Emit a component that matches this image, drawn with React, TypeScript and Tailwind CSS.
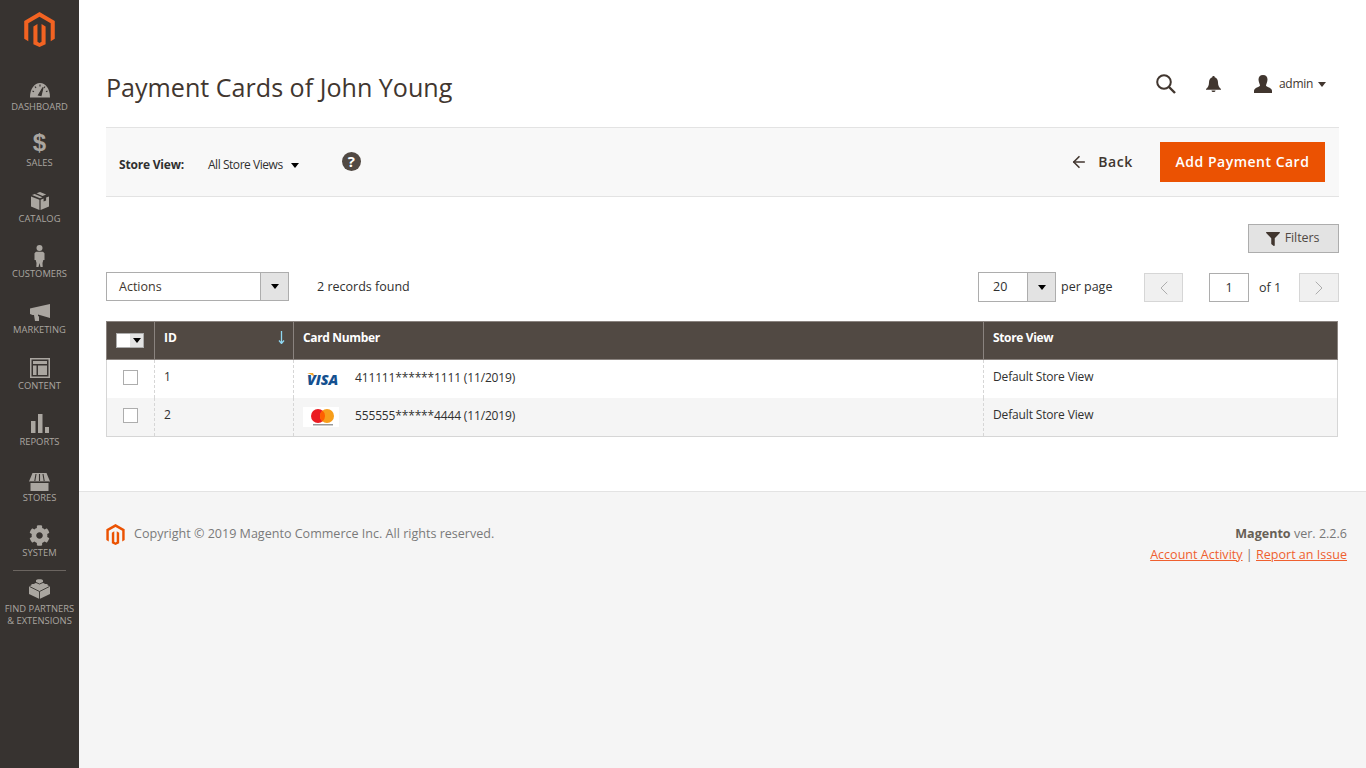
import { FaCog, FaFilter } from "react-icons/fa";
import { ArrowLeft, ChevronLeft, ChevronRight } from "lucide-react";
import type { ReactNode } from "react";

function Logo({ className }: { className: string }) {
  return (
    <svg viewBox="0 0 24 27.5" className={className} fill="currentColor">
      <path d="M12 0 0 7v14l3.2 1.9V8.9L12 3.8l8.8 5.1v14L24 21V7z" />
      <path d="M13.6 23.4 12 24.3l-1.6-.9V9.5L7.2 11.4v13.900L12 27.500l4.800-2.200V11.400l-3.200-1.900z" />
    </svg>
  );
}

function Caret({ className = "" }: { className?: string }) {
  return <span className={`inline-block w-0 h-0 border-x-[4px] border-x-transparent border-t-[5px] ${className}`} />;
}

const navItems: { label: string; icon: ReactNode }[] = [
  {
    label: "Dashboard",
    icon: (
      <svg viewBox="0 0 20 16" className="w-[20px] h-[16px] mt-[2px]">
        <path d="M0 15.500C0 6.500 4.500 1 10 1s10 5.500 10 14.500z" fill="currentColor" />
        <path d="M10 2.500v2M5 4.500l1 1.500M15 4.500l-1 1.500M2.500 9l1.500.8M17.500 9l-1.500.8M8.500 13 13 5.500l-2 8z" stroke="#373330" strokeWidth="1.200" fill="#373330" />
      </svg>
    ),
  },
  {
    label: "Sales",
    icon: <span className="text-[24px] leading-[20px] mb-[3px] font-bold font-['Liberation_Sans',sans-serif]">$</span>,
  },
  {
    label: "Catalog",
    icon: (
      <svg viewBox="0 0 18 18" className="w-[18px] h-[18px]" fill="currentColor">
        <path d="M9 0 5.500 1.300l6 2.700L15.200 2.500zM3.700 2 1 3l8 3.200 2.400-1zM0 4.500 8.400 7.800V18L0 14.500zM18 4.500V14.500L9.600 18V7.800l3-1.200v3l2.500-1V5.600z" />
      </svg>
    ),
  },
  {
    label: "Customers",
    icon: (
      <svg viewBox="0 0 11 22" className="w-[11px] h-[22px]" fill="currentColor">
        <circle cx="5.500" cy="3" r="3" />
        <path d="M2 6.800h7l1.500 1.500V15H9.300l-.8 3 .2 4H6.500L5.500 18l-1 4H2.300l.2-4-.8-3H.5V8.300z" />
      </svg>
    ),
  },
  {
    label: "Marketing",
    icon: (
      <svg viewBox="0 0 20 17" className="w-[20px] h-[17px]" fill="currentColor">
        <path d="M20 0v14L8 10.500V12l1 .5V17H5l-1-6H2.500L0 10V4.500L2 4z" />
      </svg>
    ),
  },
  {
    label: "Content",
    icon: (
      <svg viewBox="0 0 20 20" className="w-[20px] h-[20px]" fill="currentColor">
        <path fillRule="evenodd" d="M0 0h20v20H0zM1.500 1.500v17h17v-17zM3 3h14v3H3zM3 7.500h3.500V17H3zM8 7.500h9V17H8z" />
      </svg>
    ),
  },
  {
    label: "Reports",
    icon: (
      <svg viewBox="0 0 18 19" className="w-[18px] h-[19px]" fill="currentColor">
        <path d="M0 7h4.500v12H0zM7 0h4.500v19H7zM14 13h4v6h-4z" />
      </svg>
    ),
  },
  {
    label: "Stores",
    icon: (
      <svg viewBox="0 0 21 18" className="w-[21px] h-[18px] mt-[4px]" fill="currentColor">
        <path d="M3.500 0h14L21 8.500H0z" />
        <path d="M1.500 10H19.500V18H1.500z" />
        <path d="M7 1 5.800 8M10.500 1v7M14 1l1.200 7" stroke="#373330" strokeWidth="1.100" />
        <path d="M1 9.200h19" stroke="#373330" strokeWidth=".8" />
      </svg>
    ),
  },
  { label: "System", icon: <FaCog className="w-[21px] h-[21px]" /> },
];

export default function App() {
  return (
    <div className="flex min-h-[768px] font-['Open_Sans',sans-serif] text-[#303030] bg-white">
      {/* Sidebar */}
      <aside className="w-[79px] shrink-0 bg-[#373330] text-[#aaa6a0]">
        <div className="h-[65px] flex justify-center pt-[12px]">
          <Logo className="w-[31px] h-[35px] text-[#f26322]" />
        </div>
        {navItems.map((item) => (
          <div key={item.label} className="h-[55.8px] flex flex-col items-center pt-[12px]">
            <div className="h-[24px] flex items-center justify-center">{item.icon}</div>
            <span className="text-[9.4px] leading-[14px] uppercase mt-[-1px]">{item.label}</span>
          </div>
        ))}
        <div className="mx-[13px] mt-[3px] border-t border-[#6b6560]" />
        <div className="flex flex-col items-center pt-[7px]">
          <svg viewBox="0 0 21 21" className="w-[21px] h-[21px]" fill="currentColor">
            <path d="M0 8.500 10.500 3 21 8.500v7.500L10.500 21 0 16z" />
            <path d="M7 4.500V2.500c0-1.800 7-1.800 7 0v2zM2 7c0-1.500 5-1.500 5 0l-2.500 1.500zM14 7c0-1.500 5-1.500 5 0l-2.500 1.500z" />
            <path d="M.5 8.500 10.500 13.500 20.500 8.500M10.500 13.500V21M7 4.500 10.500 6 14 4.500" stroke="#373330" strokeWidth=".9" fill="none" />
          </svg>
          <span className="text-[9.4px] leading-[12px] uppercase mt-[4px] text-center">
            Find Partners
            <br />& Extensions
          </span>
        </div>
      </aside>

      <div className="flex-1 min-w-0 flex flex-col">
        <main className="h-[491px] pl-[27px] pr-[27px]">
          {/* Title row */}
          <div className="h-[127px] flex items-start justify-between pt-[69px]">
            <h1 className="text-[25.1px] leading-[36px] font-normal text-[#41362f]">Payment Cards of John Young</h1>
            <div className="flex items-center mt-[5px] pr-[13px] text-[#41362f]">
              <svg viewBox="0 0 20 20" className="w-[20px] h-[20px]" fill="none" stroke="currentColor" strokeWidth="2">
                <circle cx="8" cy="8" r="6.800" />
                <path d="M13 13l6 6" strokeWidth="2.400" />
              </svg>
              <svg viewBox="0 0 15 16" className="w-[15px] h-[16px] ml-[30px]" fill="currentColor">
                <path d="M7.500 0c.8 0 1.200.5 1.200 1.200C11 2 12 3.800 12 6.500c0 3 1 5 3 6.500v.8H0V13c2-1.500 3-3.500 3-6.500 0-2.700 1-4.500 3.300-5.300C6.300.5 6.700 0 7.500 0zM5.500 14.500h4C9.500 15.500 8.500 16 7.500 16s-2-.5-2-1.500z" />
              </svg>
              <svg viewBox="0 0 18 18" className="w-[18px] h-[18px] ml-[33px]" fill="currentColor">
                <path d="M9 0c3 0 4.500 2 4.500 4.500S12 9.500 12 10.500c0 1.500 6 2 6 5.500v2H0v-2c0-3.500 6-4 6-5.500C6 9.500 4.500 7 4.500 4.500S6 0 9 0z" />
              </svg>
              <span className="text-[12px] ml-[7px] tracking-[-0.3px] text-[#41362f]">admin</span>
              <Caret className="ml-[5px] border-t-[#41362f]" />
            </div>
          </div>

          {/* Store view bar */}
          <div className="h-[70px] bg-[#f8f8f8] border-y border-[#e3e3e3] flex items-center justify-between pl-[13px] pr-[14px]">
            <div className="flex items-center">
              <span className="text-[12px] font-bold tracking-[-0.2px] mt-[6px]">Store View:</span>
              <span className="text-[12px] ml-[24px] tracking-[-0.45px] mt-[6px]">All Store Views</span>
              <Caret className="ml-[8px] mt-[6px] border-t-black" />
              <span className="ml-[43px] mb-[2px] w-[19px] h-[19px] rounded-full bg-[#514943] text-white text-[15px] font-bold leading-[19px] text-center">?</span>
            </div>
            <div className="flex items-center">
              <ArrowLeft className="w-[18px] h-[18px] text-[#41362f]" strokeWidth={2.2} />
              <span className="ml-[10px] mb-[1px] text-[14px] font-semibold tracking-[0.6px] text-[#41362f]">Back</span>
              <button className="ml-[27px] pb-[2px] h-[40px] w-[165px] bg-[#eb5202] text-white text-[14px] font-semibold tracking-[0.5px]">Add Payment Card</button>
            </div>
          </div>

          {/* Filters */}
          <div className="mt-[27px] flex justify-end">
            <button className="w-[91px] h-[29px] pb-[1px] pr-[3px] bg-[#e3e3e3] border border-[#adadad] flex items-center justify-center text-[12.5px] tracking-[-0.1px] text-[#514943]">
              <FaFilter className="w-[16px] h-[14px] mr-[4px] mt-[1px] text-[#41362f]" />
              Filters
            </button>
          </div>

          {/* Toolbar */}
          <div className="mt-[19px] flex items-start justify-between h-[30px] text-[12.5px]">
            <div className="flex items-center">
              <div className="w-[183px] h-[29px] border border-[#adadad] flex bg-white">
                <span className="flex-1 pl-[12px] leading-[27px] text-[#41362f]">Actions</span>
                <span className="w-[28px] bg-[#e3e3e3] border-l border-[#adadad] flex items-center justify-center">
                  <Caret className="border-t-black" />
                </span>
              </div>
              <span className="ml-[28px] mt-[1px]">2 records found</span>
            </div>
            <div className="flex items-start">
              <div className="w-[78px] h-[30px] border border-[#adadad] flex bg-white">
                <span className="flex-1 pl-[14px] leading-[28px]">20</span>
                <span className="w-[28px] bg-[#e3e3e3] border-l border-[#adadad] flex items-center justify-center">
                  <Caret className="border-t-black" />
                </span>
              </div>
              <span className="ml-[5px] w-[83px] leading-[30px]">per page</span>
              <span className="mt-[1px] w-[39px] h-[29px] bg-[#f0f0f0] border border-[#d6d6d6] flex items-center justify-center text-[#adadad]">
                <ChevronLeft className="w-[24px] h-[24px]" strokeWidth={1} />
              </span>
              <span className="mt-[1px] ml-[26px] w-[40px] h-[29px] border border-[#adadad] text-center leading-[27px]">1</span>
              <span className="ml-[10px] w-[40px] leading-[31px]">of 1</span>
              <span className="mt-[1px] w-[40px] h-[29px] bg-[#f0f0f0] border border-[#d6d6d6] flex items-center justify-center text-[#adadad]">
                <ChevronRight className="w-[24px] h-[24px]" strokeWidth={1} />
              </span>
            </div>
          </div>

          {/* Grid */}
          <table className="mt-[19px] w-[1232px] table-fixed border-collapse text-[12px]">
            <colgroup>
              <col className="w-[48px]" />
              <col className="w-[139px]" />
              <col className="w-[690px]" />
              <col />
            </colgroup>
            <thead>
              <tr className="h-[38px] bg-[#514943] text-white text-left font-bold">
                <th className="border border-[#8a837f] p-0">
                  <div className="ml-[9px] w-[28px] h-[15px] flex border border-[#adadad] bg-white">
                    <span className="flex-1" />
                    <span className="w-[13px] bg-[#e3e3e3] flex items-center justify-center">
                      <Caret className="border-t-black" />
                    </span>
                  </div>
                </th>
                <th className="border border-[#8a837f] pl-[9px] pr-[9px] pb-[6px]">
                  <div className="flex items-center justify-between">
                    <span>ID</span>
                    <svg viewBox="0 0 7 13" className="w-[7px] h-[13px] mb-[1px] mr-[-1px]" fill="none" stroke="#8fd6f0" strokeWidth="1.300">
                      <path d="M3.500 0v12M1 9.500l2.500 3 2.500-3" />
                    </svg>
                  </div>
                </th>
                <th className="border border-[#8a837f] pl-[9px] pb-[6px] tracking-[-0.35px]">Card Number</th>
                <th className="border border-[#8a837f] pl-[9px] pb-[6px] tracking-[-0.35px]">Store View</th>
              </tr>
            </thead>
            <tbody>
              <Row id="1" number="411111******1111 (11/2019)" brand="visa" />
              <Row id="2" number="555555******4444 (11/2019)" brand="mc" even />
            </tbody>
          </table>
        </main>

        {/* Footer */}
        <footer className="flex-1 bg-[#f5f5f5] border-t border-[#e3e3e3] pl-[27px] pr-[19px] pt-[32px] flex justify-between items-start text-[12.56px]">
          <div className="flex items-center text-[#7a7a7a]">
            <Logo className="w-[19px] h-[21px] text-[#eb5202]" />
            <span className="ml-[9px]">Copyright © 2019 Magento Commerce Inc. All rights reserved.</span>
          </div>
          <div className="text-right text-[#777777] mt-[-1px]">
            <div className="leading-[22px]">
              <strong className="font-bold text-[#676056]">Magento</strong> ver. 2.2.6
            </div>
            <div className="leading-[20px]">
              <span className="underline text-[#ef5f2f]">Account Activity</span> | <span className="underline text-[#ef5f2f]">Report an Issue</span>
            </div>
          </div>
        </footer>
      </div>
    </div>
  );
}

function Row({ id, number, brand, even }: { id: string; number: string; brand: "visa" | "mc"; even?: boolean }) {
  const cell = "border-x border-dashed border-[#d6d6d6] align-top tracking-[-0.15px]";
  return (
    <tr className={even ? "h-[39px] bg-[#f5f5f5] border-b border-[#d6d6d6]" : "h-[38px] bg-white"}>
      <td className={`${cell} [border-left-style:solid]`}>
        <div className="mx-auto mt-[10px] w-[15px] h-[15px] border border-[#adadad] bg-white" />
      </td>
      <td className={`${cell} pl-[9px] pt-[8px]`}>{id}</td>
      <td className={`${cell} pl-[9px]`}>
        <div className="flex items-center h-[36px]">
          <span className="mt-[2px] w-[36px] h-[20px] flex items-center justify-center bg-white shrink-0">
            {brand === "visa" ? <Visa /> : <Mastercard />}
          </span>
          <span className="ml-[16px]">{number}</span>
        </div>
      </td>
      <td className={`${cell} pl-[9px] pt-[8px] [border-right-style:solid]`}>Default Store View</td>
    </tr>
  );
}

function Visa() {
  return (
    <svg viewBox="0 0 36 20" className="w-[36px] h-[20px]">
      <path d="M4 4h6l2.500 5.500C11 7 8 5 4 4z" fill="#f0a72c" />
      <text x="4" y="15.500" fontSize="14" fontWeight="800" fontStyle="italic" fontFamily="Open Sans, sans-serif" fill="#14508f" textLength="31" lengthAdjust="spacingAndGlyphs">
        VISA
      </text>
    </svg>
  );
}

function Mastercard() {
  return (
    <svg viewBox="0 0 36 20" className="w-[36px] h-[20px]">
      <circle cx="15" cy="9" r="7" fill="#eb1c22" />
      <circle cx="24" cy="9" r="7" fill="#f79e1b" />
      <path d="M19.500 3.600a7 7 0 0 1 0 10.800 7 7 0 0 1 0-10.800z" fill="#ff5f00" />
      <rect x="10" y="17" width="20" height="1.500" fill="#999" />
    </svg>
  );
}
